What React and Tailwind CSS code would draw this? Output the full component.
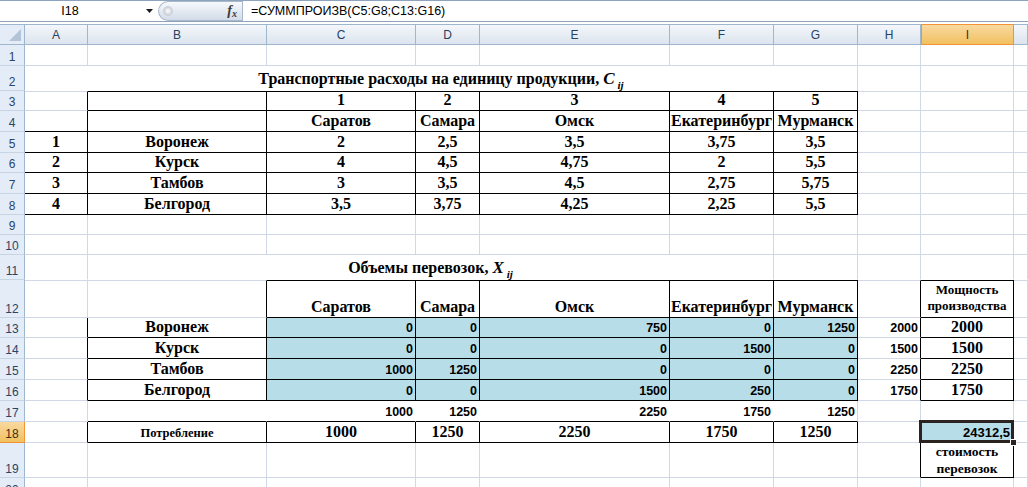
import React from "react";

// Excel 2007 look: transport problem sheet
const COLS =
  "grid grid-cols-[25px_63px_179px_149px_64px_190px_104px_84px_63px_93px_1fr]";

const SERIF = "font-['Liberation_Serif','Times_New_Roman',serif] font-bold";
const SANS = "font-['Liberation_Sans',Arial,sans-serif]";

const HEIGHT = {
  20: "h-[20px]",
  21: "h-[21px]",
  25: "h-[25px]",
  35: "h-[35px]",
  38: "h-[38px]",
};

const R = {
  g: "border-r-[#d0d7e5]",
  k: "border-r-black",
  w: "border-r-white",
};
const B = {
  g: "border-b-[#d0d7e5]",
  k: "border-b-black",
  n: "border-b-transparent",
};
const T = {
  g: "border-t border-t-[#d0d7e5]",
  k: "border-t border-t-black",
};
const SPAN = { 1: "", 5: "col-span-5", 7: "col-span-7" };

const KIND = {
  none: "leading-none",
  title: `${SERIF} text-[16px] leading-none justify-center pb-[3px]`,
  hc: `${SERIF} text-[16px] leading-none justify-center pb-[2px]`,
  num: `${SANS} font-bold text-[12.5px] leading-none justify-end pr-[2px] pb-[3px]`,
  sel: `${SANS} font-bold text-[13px] leading-none justify-end pr-[3px] pb-[3px]`,
  small: `${SERIF} text-[13px] leading-[16px] justify-center text-center pb-[3px]`,
  small2: `${SERIF} text-[13.5px] leading-[17px] items-center justify-center text-center`,
  label: `${SERIF} text-[12.5px] leading-none justify-center pb-[3px]`,
};

const NAMES = ["Саратов", "Самара", "Омск", "Екатеринбург", "Мурманск"];
const CITIES = ["Воронеж", "Курск", "Тамбов", "Белгород"];
const COSTS = [
  ["2", "2,5", "3,5", "3,75", "3,5"],
  ["4", "4,5", "4,75", "2", "5,5"],
  ["3", "3,5", "4,5", "2,75", "5,75"],
  ["3,5", "3,75", "4,25", "2,25", "5,5"],
];
const X = [
  ["0", "0", "750", "0", "1250"],
  ["0", "0", "0", "1500", "0"],
  ["1000", "1250", "0", "0", "0"],
  ["0", "0", "1500", "250", "0"],
];
const SUPPLY = ["2000", "1500", "2250", "1750"];
const DEMAND = ["1000", "1250", "2250", "1750", "1250"];
const LETTERS = ["A", "B", "C", "D", "E", "F", "G", "H", "I", ""];

function Sub({ letter }) {
  return (
    <>
      <span className="italic text-[17px]">{letter}</span>
      <span className="italic text-[11px] relative top-[4px] ml-[3px]">ij</span>
    </>
  );
}

const blank = (extra = {}) => ({ r: "g", b: "g", ...extra });
const blanks = (n, extra) => Array.from({ length: n }, () => blank(extra));

function buildRows() {
  const rows = [];
  rows.push({ n: 1, h: 21, cells: blanks(10) });
  rows.push({
    n: 2,
    h: 25,
    cells: [
      {
        span: 7,
        r: "g",
        b: "n",
        kind: "title",
        c: (
          <>
            Транспортные расходы на единицу продукции,&nbsp;
            <Sub letter="C" />
          </>
        ),
      },
      ...blanks(3, { b: "n" }),
    ],
  });
  rows.push({
    n: 3,
    h: 20,
    cells: [
      blank({ t: "g", r: "k" }),
      { t: "k", r: "k", b: "k" },
      ...["1", "2", "3", "4", "5"].map((c) => ({ t: "k", r: "k", b: "k", kind: "hc", c })),
      ...blanks(3, { t: "g" }),
    ],
  });
  rows.push({
    n: 4,
    h: 21,
    cells: [
      { r: "k", b: "k" },
      { r: "k", b: "k" },
      ...NAMES.map((c) => ({ r: "k", b: "k", kind: "hc", c })),
      ...blanks(3),
    ],
  });
  [21, 20, 21, 21].forEach((h, i) => {
    rows.push({
      n: 5 + i,
      h,
      cells: [
        { r: "k", b: "k", kind: "hc", c: String(i + 1) },
        { r: "k", b: "k", kind: "hc", c: CITIES[i] },
        ...COSTS[i].map((c) => ({ r: "k", b: "k", kind: "hc", c })),
        ...blanks(3),
      ],
    });
  });
  rows.push({ n: 9, h: 20, cells: blanks(10) });
  rows.push({ n: 10, h: 20, cells: blanks(10) });
  rows.push({
    n: 11,
    h: 25,
    cells: [
      blank({ b: "n" }),
      {
        span: 5,
        r: "g",
        b: "n",
        kind: "title",
        c: (
          <>
            Объемы перевозок,&nbsp;
            <Sub letter="X" />
          </>
        ),
      },
      ...blanks(4, { b: "n" }),
    ],
  });
  rows.push({
    n: 12,
    h: 38,
    cells: [
      blank({ t: "g" }),
      blank({ t: "g", r: "k" }),
      ...NAMES.map((c) => ({ t: "k", r: "k", b: "k", kind: "hc", c })),
      blank({ t: "g", r: "k" }),
      {
        t: "k",
        r: "k",
        b: "k",
        kind: "small",
        c: (
          <>
            Мощность
            <br />
            производства
          </>
        ),
      },
      blank({ t: "g" }),
    ],
  });
  [20, 21, 21, 21].forEach((h, i) => {
    rows.push({
      n: 13 + i,
      h,
      cells: [
        blank({ r: "k" }),
        { r: "k", b: "k", kind: "hc", c: CITIES[i] },
        ...X[i].map((c) => ({ r: "k", b: "k", kind: "num", c, blue: true })),
        blank({ r: "k", kind: "num", c: SUPPLY[i] }),
        { r: "k", b: "k", kind: "hc", c: SUPPLY[i] },
        blank(),
      ],
    });
  });
  rows.push({
    n: 17,
    h: 21,
    cells: [
      blank(),
      { r: "w", b: "k" },
      ...DEMAND.map((c, i) => ({ r: i === 4 ? "g" : "w", b: "k", kind: "num", c })),
      ...blanks(3),
    ],
  });
  rows.push({
    n: 18,
    h: 21,
    sel: true,
    cells: [
      blank({ r: "k" }),
      { r: "k", b: "k", kind: "label", c: "Потребление" },
      ...DEMAND.map((c) => ({ r: "k", b: "k", kind: "hc", c })),
      blank(),
      { r: "k", b: "k", kind: "sel", c: "24312,5", blue: true, selected: true },
      blank(),
    ],
  });
  rows.push({
    n: 19,
    h: 35,
    cells: [
      ...blanks(7),
      blank({ r: "k" }),
      {
        r: "k",
        b: "k",
        kind: "small2",
        c: (
          <>
            стоимость
            <br />
            перевозок
          </>
        ),
      },
      blank(),
    ],
  });
  rows.push({ n: 20, h: 21, cells: blanks(10) });
  return rows;
}

function Cell({ cell }) {
  const cls = [
    "relative flex items-end whitespace-nowrap border-r border-b",
    R[cell.r || "g"],
    B[cell.b || "g"],
    cell.t ? T[cell.t] : "",
    SPAN[cell.span || 1],
    KIND[cell.kind || "none"],
    cell.blue ? "bg-[#b7dee8]" : "bg-white",
    cell.selected ? "z-10" : "",
  ].join(" ");
  return (
    <div className={cls}>
      {cell.kind === "small" || cell.kind === "small2" ? <div>{cell.c}</div> : cell.c}
      {cell.selected && (
        <>
          <div className="absolute -left-[2px] -top-[2px] -right-[1px] -bottom-[1px] border-[3px] border-[#2b2320] pointer-events-none" />
          <div className="absolute -right-[4px] -bottom-[4px] w-[7px] h-[7px] bg-[#2b2320] border border-white" />
        </>
      )}
    </div>
  );
}

function RowHeader({ n, sel }) {
  return (
    <div
      className={`flex items-end justify-center pb-[2px] text-[12px] leading-none border-r border-b ${SANS} ${
        sel
          ? "bg-linear-to-b from-[#f9d99f] to-[#f1c15f] border-r-[#f29436] border-b-[#f29436] text-[#3b2f1c]"
          : "bg-[#e4ecf7] border-r-[#9eb6ce] border-b-[#c7d4e4] text-[#2b4466]"
      }`}
    >
      {n}
    </div>
  );
}

function FormulaBar() {
  return (
    <div className={`flex h-[22px] border-t border-b border-[#8ea3bd] bg-white ${SANS}`}>
      <div className="w-[140px] flex items-center justify-center text-[12.5px] text-black">I18</div>
      <div className="w-[18px] flex items-center justify-center">
        <svg width="7" height="4" viewBox="0 0 7 4">
          <polygon points="0,0 7,0 3.5,4" fill="#1a1a1a" />
        </svg>
      </div>
      <div className="w-[84px] h-[20px] self-center flex items-center justify-between pl-[4px] pr-[5px] rounded-l-full border border-r-0 border-[#a9b8cb] bg-linear-to-b from-[#f7f9fc] to-[#d3dce8]">
        <span className="w-[10px] h-[10px] rounded-full bg-radial from-white to-[#b9c2cc] border border-[#c9d0d8]" />
        <span className="font-['Liberation_Serif',serif] italic font-bold text-[14px] text-[#3a3a3a] leading-none">
          f<span className="text-[10px] relative top-[2px]">x</span>
        </span>
      </div>
      <div className="flex-1 border-l border-[#a9b8cb] flex items-center pl-[8px] text-[12.5px] text-black">
        =СУММПРОИЗВ(C5:G8;C13:G16)
      </div>
    </div>
  );
}

function ColumnHeaders() {
  return (
    <div className={`${COLS} h-[21px] border-t border-b border-[#9eb6ce] ${SANS}`}>
      <div className="relative bg-[#e4ecf7] border-r border-[#9eb6ce]">
        <svg className="absolute right-[3px] bottom-[3px]" width="12" height="12" viewBox="0 0 12 12">
          <polygon points="12,0 12,12 0,12" fill="#b4c4d8" />
        </svg>
      </div>
      {LETTERS.map((l, i) =>
        l === "I" ? (
          <div
            key={i}
            className="flex items-center justify-center text-[12px] text-[#3b2f1c] bg-linear-to-b from-[#f9d99f] to-[#f1c15f] border border-[#f29436] -mt-px -mb-px"
          >
            {l}
          </div>
        ) : (
          <div
            key={i}
            className="flex items-center justify-center text-[12px] text-[#27415f] bg-linear-to-b from-[#f4f7fb] to-[#dce4ee] border-r border-[#9eb6ce]"
          >
            {l}
          </div>
        )
      )}
    </div>
  );
}

export default function App() {
  const rows = buildRows();
  return (
    <div className="w-[1028px] h-[487px] overflow-hidden bg-white">
      <FormulaBar />
      <div className="h-[2px] bg-white" />
      <ColumnHeaders />
      {rows.map((row) => (
        <div key={row.n} className={`${COLS} ${HEIGHT[row.h]} text-black`}>
          <RowHeader n={row.n} sel={row.sel} />
          {row.cells.map((cell, i) => (
            <Cell key={i} cell={cell} />
          ))}
        </div>
      ))}
    </div>
  );
}
